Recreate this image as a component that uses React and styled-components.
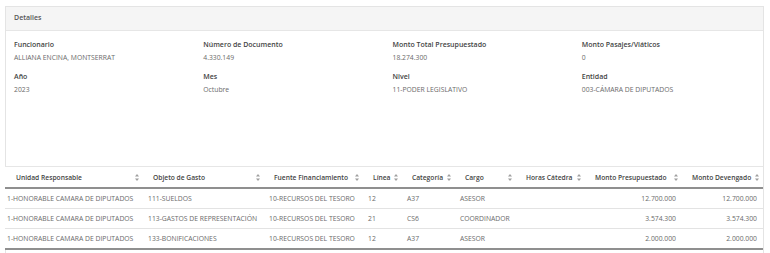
import { createGlobalStyle, styled } from "styled-components";

const GlobalStyle = createGlobalStyle`
  body {
    margin: 0;
    background: #fff;
    font-family: "Open Sans", "Liberation Sans", sans-serif;
  }
`;

const fields = [
  { label: "Funcionario", value: "ALLIANA ENCINA, MONTSERRAT" },
  { label: "Número de Documento", value: "4.330.149" },
  { label: "Monto Total Presupuestado", value: "18.274.300" },
  { label: "Monto Pasajes/Viáticos", value: "0" },
  { label: "Año", value: "2023" },
  { label: "Mes", value: "Octubre" },
  { label: "Nivel", value: "11-PODER LEGISLATIVO" },
  { label: "Entidad", value: "003-CÁMARA DE DIPUTADOS" },
];

const columns = [
  { title: "Unidad Responsable", width: 138 },
  { title: "Objeto de Gasto", width: 121 },
  { title: "Fuente Financiamiento", width: 99 },
  { title: "Línea", width: 39 },
  { title: "Categoría", width: 53 },
  { title: "Cargo", width: 61 },
  { title: "Horas Cátedra", width: 69 },
  { title: "Monto Presupuestado", width: 97, numeric: true },
  { title: "Monto Devengado", width: 81, numeric: true },
];

const rows = [
  ["1-HONORABLE CAMARA DE DIPUTADOS", "111-SUELDOS", "10-RECURSOS DEL TESORO", "12", "A37", "ASESOR", "", "12.700.000", "12.700.000"],
  ["1-HONORABLE CAMARA DE DIPUTADOS", "113-GASTOS DE REPRESENTACIÓN", "10-RECURSOS DEL TESORO", "21", "CS6", "COORDINADOR", "", "3.574.300", "3.574.300"],
  ["1-HONORABLE CAMARA DE DIPUTADOS", "133-BONIFICACIONES", "10-RECURSOS DEL TESORO", "12", "A37", "ASESOR", "", "2.000.000", "2.000.000"],
];

const SortIcon = () => (
  <svg width="4" height="7" viewBox="0 0 4 7">
    <path d="M2 0 L4 2.6 L0 2.6 Z" fill="#a0a0a0" />
    <path d="M2 7 L4 4.4 L0 4.4 Z" fill="#a0a0a0" />
  </svg>
);

const App = () => {
  return (
    <>
      <GlobalStyle />
      <Page>
        <Card>
          <CardHeader>Detalles</CardHeader>
          <Details>
            {fields.map((f) => (
              <Field key={f.label}>
                <Label>{f.label}</Label>
                <Value>{f.value}</Value>
              </Field>
            ))}
          </Details>
          <Table>
            <colgroup>
              {columns.map((c) => (
                <col key={c.title} style={{ width: c.width }} />
              ))}
            </colgroup>
            <thead>
              <tr>
                {columns.map((c) => (
                  <Th key={c.title}>
                    <ThInner>
                      <span>{c.title}</span>
                      <SortIcon />
                    </ThInner>
                  </Th>
                ))}
              </tr>
            </thead>
            <tbody>
              {rows.map((r, i) => (
                <tr key={i}>
                  {r.map((cell, j) => (
                    <Td key={j} $numeric={columns[j].numeric}>
                      {cell}
                    </Td>
                  ))}
                </tr>
              ))}
            </tbody>
          </Table>
        </Card>
      </Page>
    </>
  );
};

const Page = styled.div`
  padding: 6px 6px 0 5px;
`;

const Card = styled.div`
  border: 1px solid #e4e4e4;
  border-bottom: none;
  padding-bottom: 3px;
  background: #fff;
`;

const CardHeader = styled.div`
  height: 23px;
  line-height: 22px;
  padding-left: 8px;
  background: #f5f5f5;
  border-bottom: 1px solid #e6e6e6;
  font-size: 7px;
  font-weight: 600;
  color: #555;
`;

const Details = styled.div`
  display: grid;
  grid-template-columns: repeat(4, 1fr);
  align-content: start;
  row-gap: 9px;
  padding: 9px 0 0;
  height: 135px;
  box-sizing: border-box;
`;

const Field = styled.div`
  padding-left: 8px;
  display: flex;
  flex-direction: column;
  gap: 3px;
`;

const Label = styled.div`
  font-size: 7px;
  font-weight: 600;
  line-height: 10px;
  color: #444;
`;

const Value = styled.div`
  font-size: 6.8px;
  line-height: 10px;
  color: #6a6a6a;
`;

const Table = styled.table`
  width: calc(100% + 1px);
  margin-left: -1px;
  border-collapse: collapse;
  table-layout: fixed;
  background: #fff;
  border-top: 1px solid #e6e6e6;
  border-bottom: 2px solid #8f8f8f;
  font-size: 6.8px;
`;

const Th = styled.th`
  height: 20px;
  padding: 0 4px 0 10px;
  border-bottom: 2px solid #8f8f8f;
  text-align: left;
  font-size: 6.7px;
  font-weight: 600;
  color: #444;
  white-space: nowrap;

  &:first-child {
    padding-left: 11px;
  }
`;

const ThInner = styled.div`
  display: flex;
  align-items: center;
  justify-content: space-between;
`;

const Td = styled.td`
  height: 19px;
  padding: 0 6px 0 5px;
  border-top: 1px solid #e3e3e3;
  color: #6a6a6a;
  white-space: nowrap;
  overflow: hidden;
  text-align: ${(p) => (p.$numeric ? "right" : "left")};

  &:first-child {
    padding-left: 2px;
  }
`;

export default App;
